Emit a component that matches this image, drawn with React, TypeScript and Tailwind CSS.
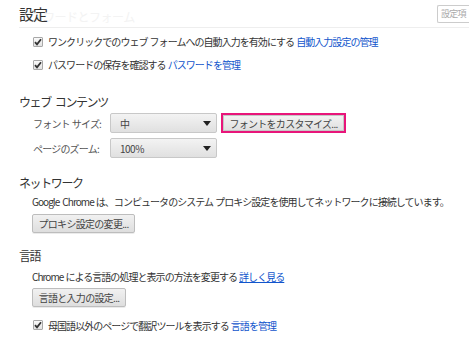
import React from "react";

const FONT = '"Noto Sans CJK JP", "Noto Sans", "Liberation Sans", sans-serif';

function Sp({ w = 2 }: { w?: number }) {
  return <span className="inline-block" style={{ width: w }} />;
}

function Check() {
  return (
    <span className="w-[10px] h-[10px] shrink-0 border border-[#a8a8a8] rounded-[1px] bg-gradient-to-b from-[#fafafa] to-[#e2e2e2] flex items-center justify-center">
      <svg width="8" height="8" viewBox="0 0 8 8">
        <path d="M1 4.2 L3 6.4 L7 1.2" fill="none" stroke="#333" strokeWidth="1.8" />
      </svg>
    </span>
  );
}

function Btn({ children, className = "" }: { children: React.ReactNode; className?: string }) {
  return (
    <div
      className={
        "h-[19px] whitespace-nowrap flex items-center border border-[#bdbdbd] rounded-[2px] bg-gradient-to-b from-[#f1f1f1] to-[#dedede] text-[#444] text-[10px] tracking-[-0.7px] shadow-[0_1px_0_rgba(0,0,0,0.08)] " +
        className
      }
    >
      {children}
    </div>
  );
}

function Select({ value }: { value: string }) {
  return (
    <div className="w-[107px] h-[20px] flex items-center justify-between pl-[9px] pr-[5px] border border-[#c8c8c8] rounded-[2px] bg-gradient-to-b from-[#f3f3f3] to-[#e0e0e0] text-[#444] text-[10px] tracking-[-0.5px]">
      <span>{value}</span>
      <svg width="8" height="5" viewBox="0 0 8 5">
        <path d="M0 0 H8 L4 5 Z" fill="#222" />
      </svg>
    </div>
  );
}

export default function App() {
  return (
    <div
      className="w-[469px] h-[338px] overflow-hidden bg-white text-[#333] relative whitespace-nowrap"
      style={{ fontFamily: FONT }}
    >
      <div className="ml-[19px] w-[450px] h-[28px] border-b border-[#eeeeee] relative flex items-start justify-between">
        <div className="absolute left-[1px] top-[10px] text-[12px] tracking-[-0.5px] leading-[14px] text-[#f3f3f3]">
          パスワードとフォーム
        </div>
        <div className="relative mt-[4px] text-[15px] leading-[20px] tracking-[-1px] text-[#333]">設定</div>
        <div className="mt-[5px] w-[32px] h-[18px] border border-r-0 border-[#cccccc] rounded-l-[2px] bg-white pl-[3px] text-[9px] leading-[16px] tracking-[-0.8px] text-[#aaa] overflow-hidden">
          設定項
        </div>
      </div>

      <div className="ml-[33px] mt-[2px] h-[23px] flex items-center gap-[5px] text-[10px] tracking-[-0.95px]">
        <Check />
        <span>
          ワンクリックでのウェブ<Sp />フォームへの自動入力を有効にする<Sp />
          <span className="text-[#1155cc]">自動入力設定の管理</span>
        </span>
      </div>
      <div className="ml-[33px] h-[23px] flex items-center gap-[5px] text-[10px] tracking-[-0.95px]">
        <Check />
        <span>
          パスワードの保存を確認する<Sp />
          <span className="text-[#1155cc]">パスワードを管理</span>
        </span>
      </div>

      <div className="ml-[19px] mt-[16px] h-[20px] flex items-center text-[12px] tracking-[-1.4px] text-[#333]">
        ウェブ<Sp w={4} />コンテンツ
      </div>
      <div className="ml-[33px] mt-[1px] h-[20px] flex items-center text-[10px] tracking-[-0.8px]">
        <span className="w-[77px] text-[#555]">
          フォント<Sp />サイズ:
        </span>
        <Select value="中" />
        <div className="ml-[4px] h-[20px] border-2 border-[#e8157a] flex">
          <div className="h-full w-[121px] flex items-center justify-center border border-[#c6c6c6] bg-gradient-to-b from-[#f2f2f2] to-[#e0e0e0] text-[#444] text-[10px] tracking-[-0.7px]">
            フォントをカスタマイズ...
          </div>
        </div>
      </div>
      <div className="ml-[33px] mt-[5px] h-[20px] flex items-center text-[10px] tracking-[-0.8px]">
        <span className="w-[77px] text-[#555]">ページのズーム:</span>
        <Select value="100%" />
      </div>

      <div className="ml-[19px] mt-[15px] h-[20px] flex items-center text-[12px] tracking-[-1.4px] text-[#333]">
        ネットワーク
      </div>
      <div className="ml-[32px] h-[16px] flex items-center text-[10px] tracking-[-0.95px]">
        Google<Sp w={3} />Chrome<Sp />は、コンピュータのシステム<Sp />プロキシ設定を使用してネットワークに接続しています。
      </div>
      <div className="ml-[32px] mt-[5px] flex">
        <Btn className="w-[103px] justify-center">プロキシ設定の変更...</Btn>
      </div>

      <div className="ml-[19px] mt-[13px] h-[20px] flex items-center text-[12px] tracking-[-1.4px] text-[#333]">
        言語
      </div>
      <div className="ml-[32px] mt-[2px] h-[16px] flex items-center text-[10px] tracking-[-0.95px]">
        <span>
          Chrome<Sp />による言語の処理と表示の方法を変更する<Sp />
          <span className="text-[#1155cc] underline">詳しく見る</span>
        </span>
      </div>
      <div className="ml-[32px] mt-[4px] flex">
        <Btn className="w-[94px] justify-center">言語と入力の設定...</Btn>
      </div>

      <div className="ml-[33px] mt-[8px] h-[20px] flex items-center gap-[5px] text-[10px] tracking-[-0.95px]">
        <Check />
        <span>
          母国語以外のページで翻訳ツールを表示する<Sp />
          <span className="text-[#1155cc]">言語を管理</span>
        </span>
      </div>
    </div>
  );
}
